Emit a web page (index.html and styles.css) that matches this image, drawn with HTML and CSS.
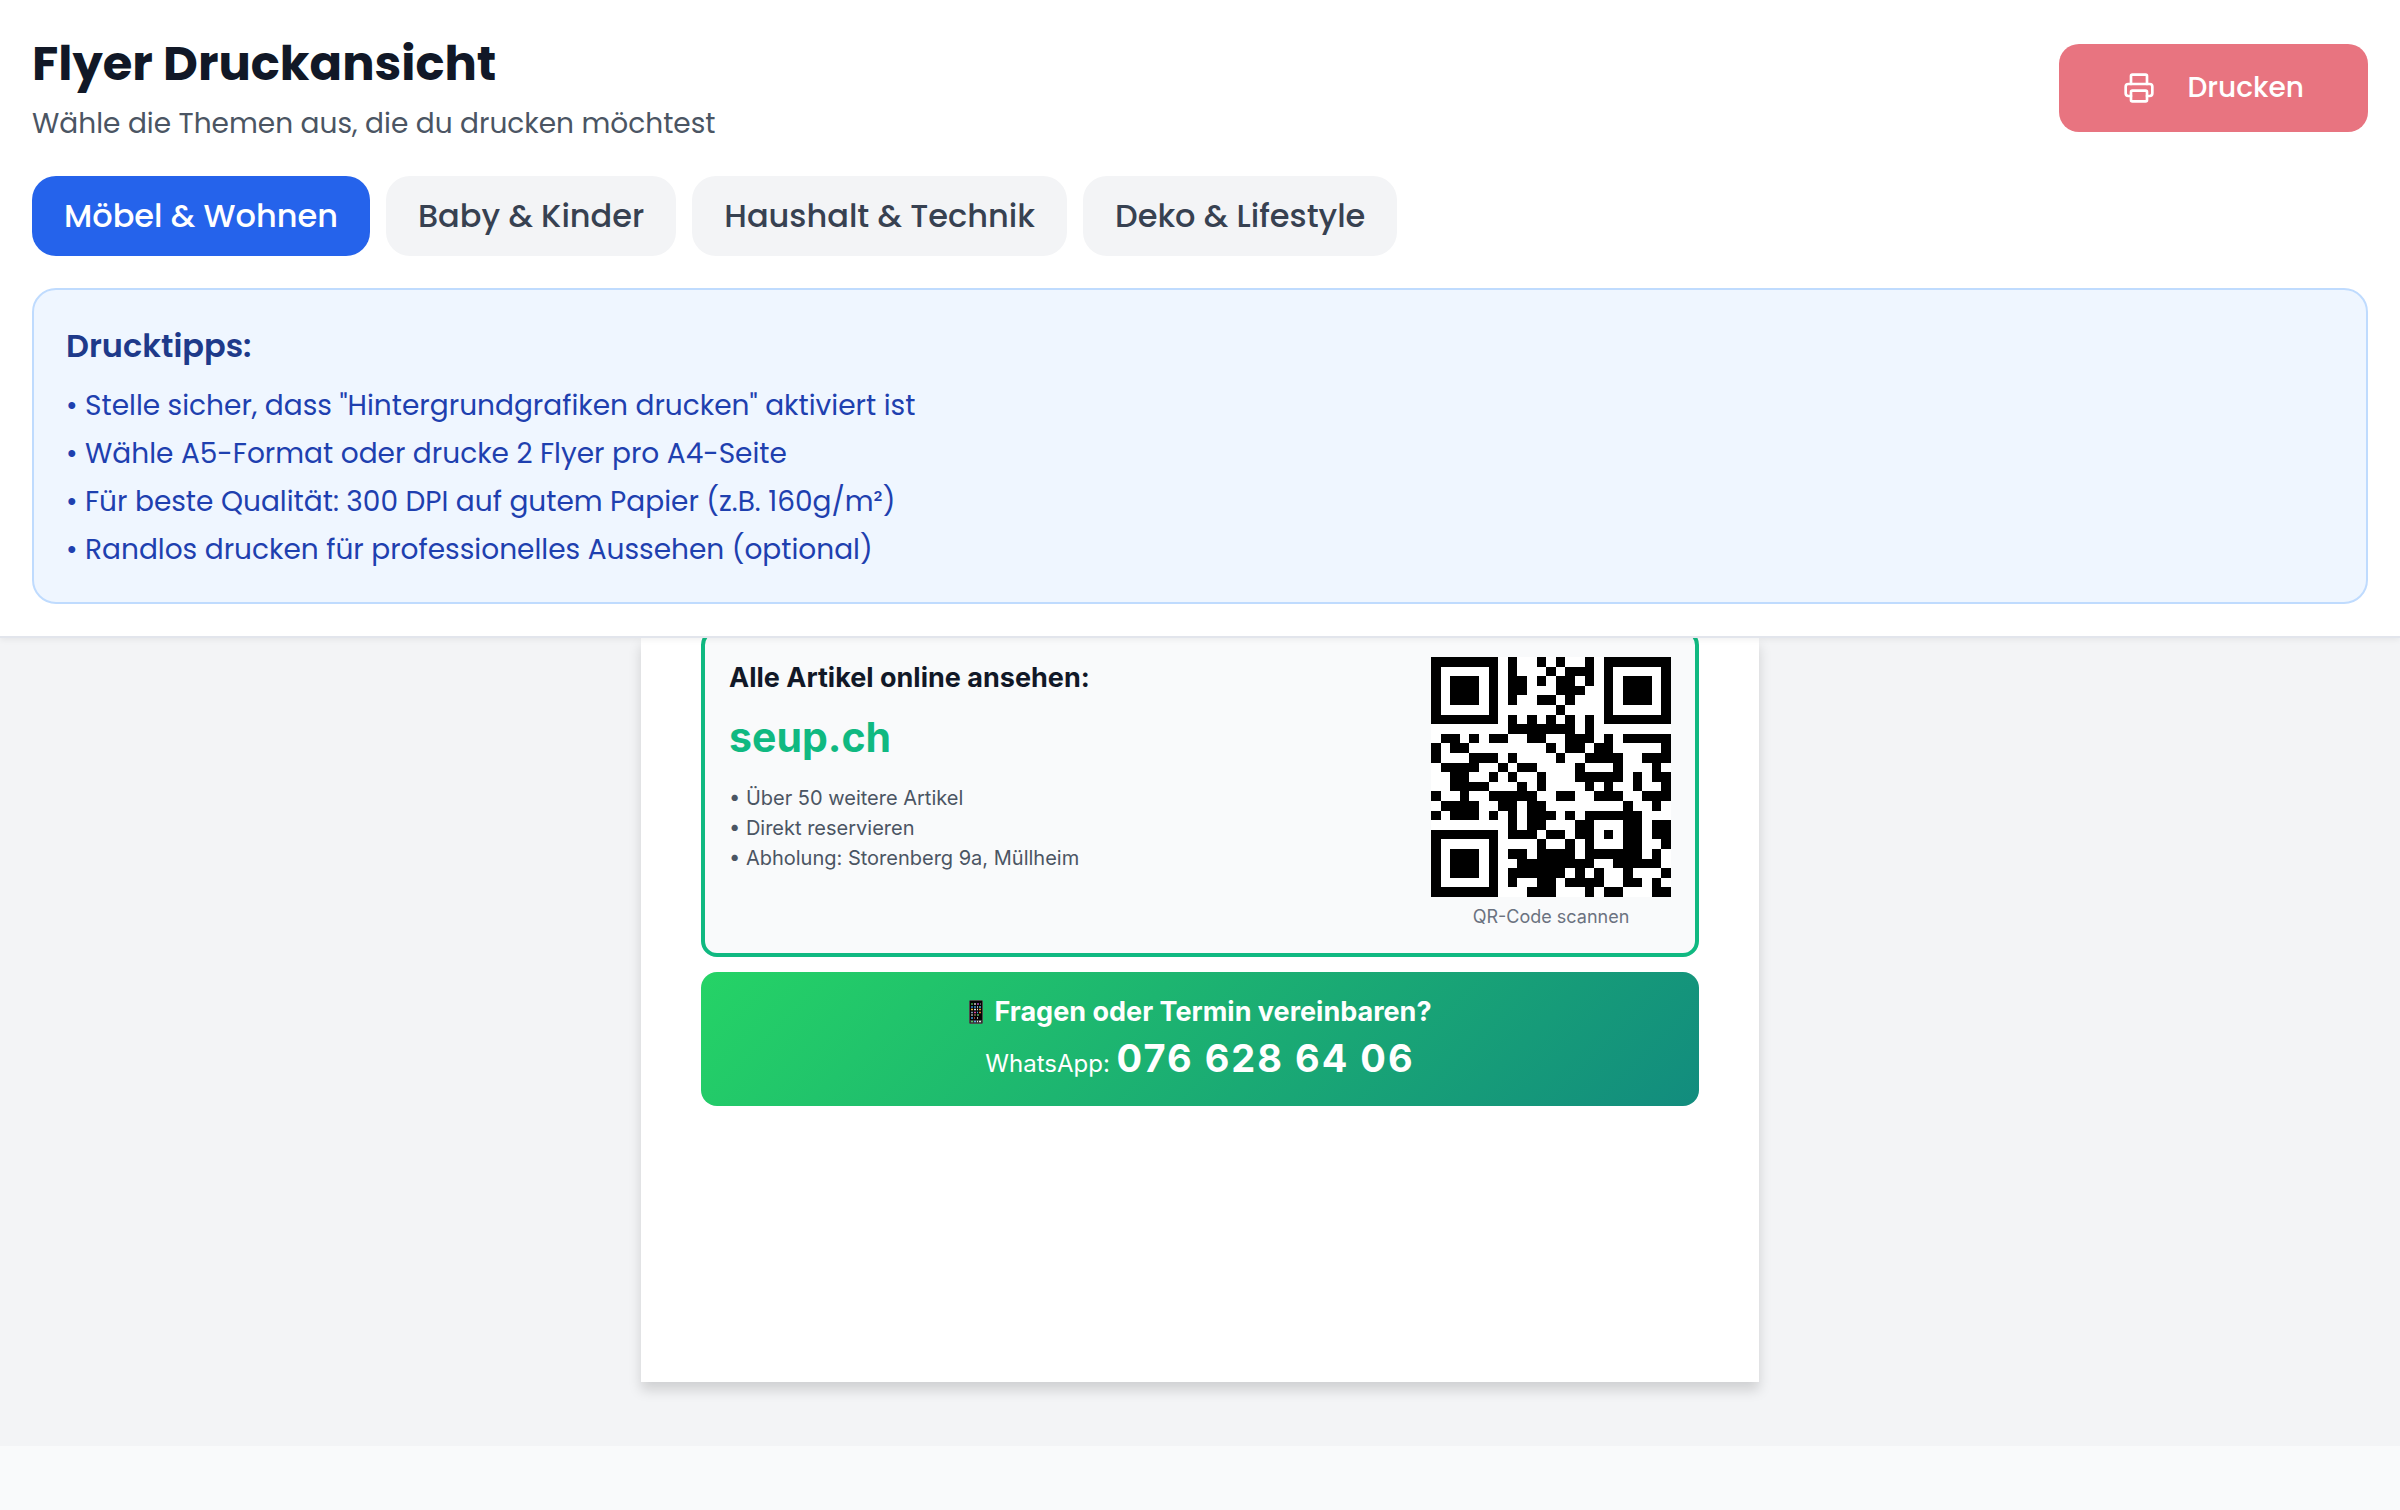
FILE: index.html
```html
<!DOCTYPE html>
<html lang="de">
<head>
<meta charset="utf-8">
<meta name="viewport" content="width=device-width, initial-scale=1">
<title>Flyer Druckansicht</title>
<link rel="stylesheet" href="styles.css">
</head>
<body>
<header class="toolbar">
  <div class="toolbar-top">
    <div class="heading">
      <h1 class="title">Flyer Druckansicht</h1>
      <p class="subtitle">Wähle die Themen aus, die du drucken möchtest</p>
    </div>
    <button class="print-button" type="button">
      <svg class="print-icon" viewBox="0 0 24 24" fill="none" stroke="currentColor" stroke-width="2" stroke-linecap="round" stroke-linejoin="round" aria-hidden="true">
        <path d="M6 18H4a2 2 0 0 1-2-2v-5a2 2 0 0 1 2-2h16a2 2 0 0 1 2 2v5a2 2 0 0 1-2 2h-2"/>
        <path d="M6 9V3a1 1 0 0 1 1-1h10a1 1 0 0 1 1 1v6"/>
        <rect x="6" y="14" width="12" height="8" rx="1"/>
      </svg>
      <span>Drucken</span>
    </button>
  </div>
  <nav class="tabs" aria-label="Themen">
    <button class="tab tab-active" type="button">Möbel &amp; Wohnen</button>
    <button class="tab" type="button">Baby &amp; Kinder</button>
    <button class="tab" type="button">Haushalt &amp; Technik</button>
    <button class="tab" type="button">Deko &amp; Lifestyle</button>
  </nav>
  <section class="tips">
    <h2 class="tips-title">Drucktipps:</h2>
    <ul class="tips-list">
      <li>• Stelle sicher, dass "Hintergrundgrafiken drucken" aktiviert ist</li>
      <li>• Wähle A5-Format oder drucke 2 Flyer pro A4-Seite</li>
      <li>• Für beste Qualität: 300 DPI auf gutem Papier (z.B. 160g/m²)</li>
      <li>• Randlos drucken für professionelles Aussehen (optional)</li>
    </ul>
  </section>
</header>
<main class="stage">
  <article class="flyer">
    <section class="online">
      <div class="online-text">
        <h3 class="online-title">Alle Artikel online ansehen:</h3>
        <p class="site">seup.ch</p>
        <ul class="facts">
          <li>• Über 50 weitere Artikel</li>
          <li>• Direkt reservieren</li>
          <li>• Abholung: Storenberg 9a, Müllheim</li>
        </ul>
      </div>
      <figure class="qr">
        <svg class="qr-code" viewBox="0 0 25 25" role="img" aria-label="QR-Code" shape-rendering="crispEdges">
          <rect width="25" height="25" fill="#fff"/>
          <g fill="none" stroke="#000">
            <rect x=".5" y=".5" width="6" height="6"/>
            <rect x="18.5" y=".5" width="6" height="6"/>
            <rect x=".5" y="18.5" width="6" height="6"/>
          </g>
          <path d="M2 2h3v3H2zM20 2h3v3h-3zM2 20h3v3H2z"/>
          <path transform="translate(0 .5)" stroke="#000" fill="none" d="M8 0h1M11 0h1M13 0h1M16 0h1
            M8 1h1M12 1h1M14 1h3
            M8 2h2M11 2h1M13 2h2M16 2h1
            M8 3h2M13 3h3
            M8 4h1M11 4h2M14 4h1
            M13 5h1
            M8 6h1M10 6h1M12 6h1M14 6h1M16 6h1
            M8 7h7M16 7h1
            M1 8h2M4 8h1M6 8h2M10 8h2M14 8h3M18 8h1M20 8h5
            M0 9h1M2 9h2M12 9h1M14 9h2M17 9h2M24 9h1
            M0 10h1M4 10h3M8 10h1M13 10h1M16 10h4M22 10h3
            M1 11h4M7 11h1M9 11h2M15 11h1M19 11h1M23 11h1
            M2 12h2M6 12h1M8 12h1M11 12h1M15 12h5M21 12h1M23 12h2
            M2 13h4M9 13h1M11 13h1M16 13h1M18 13h1M21 13h1M24 13h1
            M0 14h1M3 14h1M6 14h5M13 14h2M17 14h3M22 14h3
            M1 15h4M7 15h2M10 15h2M20 15h1M23 15h1
            M0 16h1M2 16h3M6 16h1M8 16h1M10 16h3M14 16h1M16 16h6
            M8 17h1M10 17h2M15 17h2M20 17h2M23 17h2
            M8 18h3M12 18h2M15 18h2M18 18h1M20 18h2M23 18h2
            M11 19h1M14 19h1M16 19h1M20 19h2M24 19h1
            M8 20h2M11 20h4M16 20h6M23 20h1
            M9 21h8M19 21h5
            M8 22h6M15 22h1M17 22h1M20 22h1M24 22h1
            M8 23h1M11 23h2M14 23h4M20 23h2M23 23h1
            M10 24h3M16 24h1M18 24h2M23 24h2"/>
        </svg>
        <figcaption class="qr-caption">QR-Code scannen</figcaption>
      </figure>
    </section>
    <section class="contact">
      <h3 class="contact-title">
        <svg class="phone" viewBox="0 0 14 24" aria-hidden="true">
          <rect x=".5" y=".5" width="13" height="23" rx="1" fill="#050505" stroke="#4b4b4b"/>
          <g fill="none" stroke-width="1.5">
            <path stroke="#43a84a" d="M2 4h2"/><path stroke="#ccc" d="M5 4h2"/><path stroke="#b14fc0" d="M8 4h2"/><path stroke="#777" d="M11 4h1"/>
            <path stroke="#358bd0" d="M2 7h2M5 7h2"/><path stroke="#ddd" d="M8 7h1"/><path stroke="#3cb6cf" d="M10 7h2"/>
            <path stroke="#e5b83c" d="M2 9.500h2"/><path stroke="#ddd" d="M5 9.500h2M8 9.500h1"/><path stroke="#e58c32" d="M10 9.500h2"/>
            <path stroke="#8198a8" d="M2 12.500h2"/><path stroke="#d84c9c" d="M5 12.500h2"/><path stroke="#459bdf" d="M8 12.500h1"/><path stroke="#e27632" d="M10 12.500h2"/>
            <path stroke="#a5a5a5" d="M2 15h2"/><path stroke="#806744" d="M5 15h2"/><path stroke="#5bb660" d="M8 15h2"/>
            <path stroke="#389bd5" d="M2 18h2"/><path stroke="#d55142" d="M5 18h1"/><path stroke="#ddd" d="M8 18h1"/>
            <path stroke="#333" stroke-width="3" d="M1 21.500h12"/>
            <path stroke="#58c566" d="M2 21.500h2"/><path stroke="#5ea9e8" d="M5 21.500h2"/><path stroke="#ddd" d="M8 21.500h1M10 21.500h2"/>
          </g>
        </svg>
        Fragen oder Termin vereinbaren?
      </h3>
      <p class="contact-line">WhatsApp: <strong class="number">076 628 64 06</strong></p>
    </section>
  </article>
</main>
</body>
</html>
```
FILE: styles.css
```css
* {
  box-sizing: border-box;
  margin: 0;
  padding: 0;
}

body {
  background: #f9fafb;
  color: #111827;
  font-family: Poppins, Inter, sans-serif;
}

button {
  border: 0;
  font: inherit;
  cursor: pointer;
}

ul {
  list-style: none;
}

.toolbar {
  position: relative;
  z-index: 1;
  display: flex;
  flex-direction: column;
  gap: 32px;
  padding: 32px;
  background: #fff;
  border-bottom: 2px solid #e2e5ec;
  box-shadow: 0 2px 6px rgba(0, 0, 0, 0.06);
}

.toolbar-top {
  display: flex;
  align-items: center;
  justify-content: space-between;
}

.heading {
  display: flex;
  flex-direction: column;
  gap: 8px;
}

.title {
  font-size: 48px;
  font-weight: 700;
  line-height: 64px;
}

.subtitle {
  color: #4b5563;
  font-size: 28px;
  line-height: 40px;
}

.print-button {
  display: flex;
  align-items: center;
  gap: 32px;
  padding: 24px 64px;
  background: #e87480;
  border-radius: 20px;
  color: #fff;
  font-size: 28px;
  font-weight: 500;
  line-height: 40px;
}

.print-icon {
  width: 32px;
  height: 32px;
}

.tabs {
  display: flex;
  flex-wrap: wrap;
  gap: 16px;
}

.tab {
  padding: 16px 32px;
  background: #f3f4f6;
  border-radius: 24px;
  color: #374151;
  font-size: 32px;
  font-weight: 500;
  line-height: 48px;
}

.tab-active {
  background: #2563eb;
  color: #fff;
}

.tips {
  display: flex;
  flex-direction: column;
  gap: 16px;
  padding: 32px;
  background: #eff6ff;
  border: 2px solid #bfdbfe;
  border-radius: 24px;
}

.tips-title {
  color: #1e3a8a;
  font-size: 32px;
  font-weight: 600;
  line-height: 48px;
}

.tips-list {
  display: flex;
  flex-direction: column;
  gap: 8px;
  color: #1e40af;
  font-size: 28px;
  line-height: 40px;
}

.stage {
  display: flex;
  justify-content: center;
  padding-bottom: 64px;
  background: #f3f4f6;
  overflow: hidden;
}

.flyer {
  display: flex;
  flex-direction: column;
  gap: 15px;
  width: 1118px;
  max-width: 100%;
  padding: 0 60px 276px;
  background: #fff;
  box-shadow: 0 8px 12px rgba(0, 0, 0, 0.15);
  font-family: Inter, sans-serif;
}

.online {
  display: flex;
  justify-content: space-between;
  margin-top: -9px;
  padding: 24px;
  background: #f9fafb;
  border: 4px solid #10b981;
  border-radius: 16px;
}

.online-title {
  font-size: 27px;
  font-weight: 700;
  line-height: 42px;
}

.site {
  padding: 6px 0 14px;
  color: #10b981;
  font-size: 41px;
  font-weight: 700;
  line-height: 64px;
}

.facts {
  color: #4b5563;
  font-size: 20px;
  line-height: 30px;
}

.qr {
  width: 240px;
}

.qr-code {
  display: block;
  width: 240px;
  height: 240px;
}

.qr-caption {
  padding-top: 8px;
  color: #6b7280;
  font-size: 18px;
  line-height: 24px;
  text-align: center;
}

.contact {
  padding: 20px 24px;
  background: linear-gradient(135deg, #25d366, #128c7e);
  border-radius: 16px;
  color: #fff;
  text-align: center;
}

.contact-title {
  display: flex;
  align-items: center;
  justify-content: center;
  gap: 12px;
  font-size: 27px;
  font-weight: 700;
  line-height: 40px;
}

.phone {
  width: 14px;
  height: 24px;
}

.contact-line {
  padding-top: 10px;
  font-size: 24px;
  line-height: 44px;
}

.number {
  font-size: 38px;
  font-weight: 700;
  line-height: 24px;
  letter-spacing: 2px;
}
```
